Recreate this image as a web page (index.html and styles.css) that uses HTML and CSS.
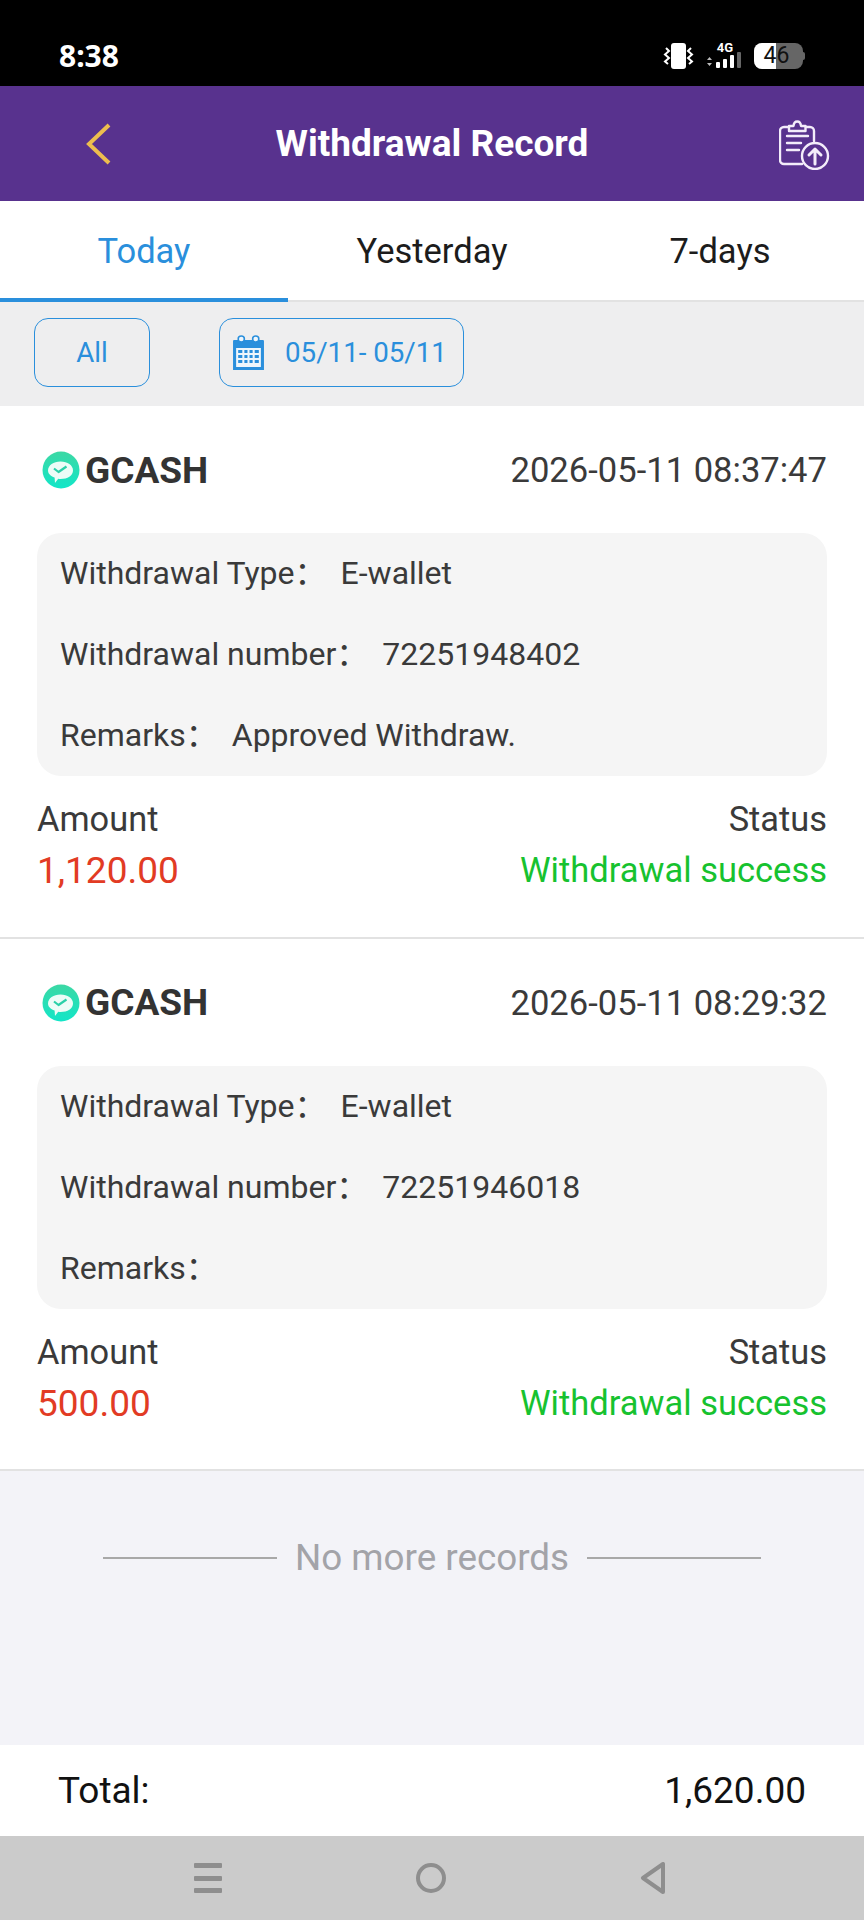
FILE: index.html
```html
<!DOCTYPE html>
<html lang="en">
<head>
<meta charset="utf-8">
<title>Withdrawal Record</title>
<link rel="stylesheet" href="styles.css">
</head>
<body>
<div class="app">
  <div class="statusbar">
    <span class="time">8:38</span>
    <div class="status-icons">
      <svg class="ic-vib" viewBox="0 0 32 26" width="32" height="26"><rect x="8" y="0" width="15" height="26" rx="3" fill="#fff"/><path d="M3 5l3 3-4 3.500 4 3.500-4 3.500 3 2.500M28 5l-3 3 4 3.500-4 3.500 4 3.500-3 2.500" fill="none" stroke="#fff" stroke-width="2"/></svg>
      <div class="signal">
        <span class="net">4G</span>
        <svg viewBox="0 0 35 17" width="35" height="17"><path d="M0 8l2.500-3L5 8zM0 11l2.500 3L5 11z" fill="#bbb"/><rect x="9" y="10" width="4" height="6" rx="1" fill="#fff"/><rect x="16" y="7" width="4" height="9" rx="1" fill="#fff"/><rect x="23" y="3" width="4" height="13" rx="1" fill="#fff"/><rect x="30" y="0" width="4" height="16" rx="1" fill="#666"/></svg>
      </div>
      <div class="battery"><div class="batt-fill"></div><span class="batt-num">46</span><i class="batt-tip"></i></div>
    </div>
  </div>
  <header class="topbar">
    <svg class="back" viewBox="0 0 26 44" width="26" height="44"><path d="M24 3L4 22l20 19" fill="none" stroke="#edbd4e" stroke-width="4"/></svg>
    <h1 class="title">Withdrawal Record</h1>
    <svg class="export" viewBox="0 0 51 50" width="51" height="50" fill="none" stroke="#f3ecfa" stroke-width="2.400" stroke-linecap="round" stroke-linejoin="round">
      <path d="M10 7H5a4 4 0 0 0-4 4v29a4 4 0 0 0 4 4h18"/>
      <path d="M27 7h4a4 4 0 0 1 4 4v10"/>
      <path d="M10 11V6h4.500c.5-6 7-6 7.500 0h4.500v5z"/>
      <path d="M8 16h21M8 23h14M8 30h12"/>
      <circle cx="36" cy="36" r="13"/>
      <path d="M36 44V29M30 35l6-6 6 6" stroke-width="3"/>
    </svg>
  </header>
  <nav class="tabs">
    <div class="tab active">Today</div>
    <div class="tab">Yesterday</div>
    <div class="tab">7-days</div>
  </nav>
  <div class="filters">
    <div class="chip chip-all">All</div>
    <div class="chip chip-date">
      <svg viewBox="0 0 32 36" width="33" height="36" preserveAspectRatio="none"><path d="M2 5h28a1 1 0 0 1 1 1v29H1V6a1 1 0 0 1 1-1z" fill="#2a8fdc"/><rect x="4" y="13" width="24" height="19" fill="#eef6fc"/><g fill="#2a8fdc"><rect x="6" y="15" width="4" height="3"/><rect x="12" y="15" width="3" height="3"/><rect x="17" y="15" width="3" height="3"/><rect x="22" y="15" width="4" height="3"/><rect x="6" y="20" width="4" height="3"/><rect x="12" y="20" width="3" height="3"/><rect x="17" y="20" width="3" height="3"/><rect x="22" y="20" width="4" height="3"/><rect x="6" y="25" width="4" height="3"/><rect x="12" y="25" width="3" height="3"/><rect x="17" y="25" width="3" height="3"/><rect x="22" y="25" width="4" height="3"/></g><circle cx="9" cy="4" r="3" fill="#eef6fc" stroke="#2a8fdc" stroke-width="1.500"/><circle cx="23" cy="4" r="3" fill="#eef6fc" stroke="#2a8fdc" stroke-width="1.500"/></svg>
      <span>05/11- 05/11</span>
    </div>
  </div>

  <section class="card">
    <div class="card-head">
      <div class="brand">
        <svg class="logo" viewBox="0 0 38 38" width="38" height="38"><defs><linearGradient id="g1" x1="0" y1="0" x2="0" y2="1"><stop offset="0" stop-color="#3cd8a4"/><stop offset="1" stop-color="#12e6c8"/></linearGradient></defs><circle cx="19" cy="19" r="18.500" fill="url(#g1)"/><path d="M18.500 10.500c7 0 12.500 3.800 12.500 9s-5.500 8.500-12.500 8.500c-.8 0-1.600 0-2.300-.2L13 32l-.4-5.500C8.500 25 6 22.500 6 19.500c0-5.200 5.500-9 12.500-9z" fill="#edfcf7"/><path d="M12 17.500l4.500 3.500 8-5.500" fill="none" stroke="#2bd0a8" stroke-width="2.200" stroke-linejoin="round"/></svg>
        <span class="brand-name">GCASH</span>
      </div>
      <span class="stamp">2026-05-11 08:37:47</span>
    </div>
    <div class="details">
      <div class="row">Withdrawal Type：<span class="val">E-wallet</span></div>
      <div class="row">Withdrawal number：<span class="val">72251948402</span></div>
      <div class="row">Remarks：<span class="val">Approved Withdraw.</span></div>
    </div>
    <div class="summary">
      <div class="sum-col"><span class="lbl">Amount</span><span class="amt">1,120.00</span></div>
      <div class="sum-col end"><span class="lbl">Status</span><span class="ok">Withdrawal success</span></div>
    </div>
  </section>

  <section class="card">
    <div class="card-head">
      <div class="brand">
        <svg class="logo" viewBox="0 0 38 38" width="38" height="38"><circle cx="19" cy="19" r="18.500" fill="url(#g1)"/><path d="M18.500 10.500c7 0 12.500 3.800 12.500 9s-5.500 8.500-12.500 8.500c-.8 0-1.600 0-2.300-.2L13 32l-.4-5.500C8.500 25 6 22.500 6 19.500c0-5.200 5.500-9 12.500-9z" fill="#edfcf7"/><path d="M12 17.500l4.500 3.500 8-5.500" fill="none" stroke="#2bd0a8" stroke-width="2.200" stroke-linejoin="round"/></svg>
        <span class="brand-name">GCASH</span>
      </div>
      <span class="stamp">2026-05-11 08:29:32</span>
    </div>
    <div class="details">
      <div class="row">Withdrawal Type：<span class="val">E-wallet</span></div>
      <div class="row">Withdrawal number：<span class="val">72251946018</span></div>
      <div class="row">Remarks：</div>
    </div>
    <div class="summary">
      <div class="sum-col"><span class="lbl">Amount</span><span class="amt">500.00</span></div>
      <div class="sum-col end"><span class="lbl">Status</span><span class="ok">Withdrawal success</span></div>
    </div>
  </section>

  <div class="list-end">
    <div class="nomore"><i class="rule"></i><span>No more records</span><i class="rule"></i></div>
  </div>

  <div class="total"><span>Total:</span><span>1,620.00</span></div>

  <div class="navbar">
    <svg viewBox="0 0 28 30" width="28" height="30"><g fill="#8e8e8e"><rect x="0" y="0" width="28" height="5" rx="1"/><rect x="0" y="13" width="28" height="5" rx="1"/><rect x="0" y="25" width="28" height="5" rx="1"/></g></svg>
    <svg viewBox="0 0 30 30" width="30" height="30"><circle cx="15" cy="15" r="13" fill="none" stroke="#8e8e8e" stroke-width="4"/></svg>
    <svg viewBox="0 0 26 32" width="26" height="32"><path d="M23 2v28L3 16z" fill="none" stroke="#8e8e8e" stroke-width="4" stroke-linejoin="round"/></svg>
  </div>
</div>
</body>
</html>
```

FILE: styles.css
```css
* { box-sizing: border-box; }
html, body { margin: 0; padding: 0; }
body { font-family: Roboto, "Noto Sans CJK SC", "Liberation Sans", sans-serif; background: #f3f3f8; }
.app { width: 864px; height: 1920px; display: flex; flex-direction: column; background: #f3f3f8; overflow: hidden; }

.statusbar { height: 86px; background: #000; color: #fff; display: flex; align-items: flex-end; justify-content: space-between; padding: 0 61px 17px 59px; flex: none; }
.time { font-size: 30px; font-weight: 700; line-height: 30px; margin-bottom: -2px; font-family: "Noto Sans", Roboto, sans-serif; }
.status-icons { display: flex; align-items: flex-end; gap: 12px; }
.signal { display: flex; flex-direction: column; align-items: flex-end; width: 35px; }
.net { font-size: 13px; font-weight: 700; line-height: 9px; margin-right: 9px; }
.battery { position: relative; width: 49px; height: 26px; border-radius: 8px; background: #666; }
.batt-fill { width: 22px; height: 26px; background: #fff; border-radius: 8px 0 0 8px; }
.batt-num { position: absolute; left: 0; top: 0; width: 45px; text-align: center; color: #111; font-size: 23px; line-height: 26px; }
.batt-tip { position: absolute; right: -2px; top: 9px; width: 2px; height: 8px; background: #666; border-radius: 0 2px 2px 0; }

.topbar { height: 115px; background: #58328e; display: grid; grid-template-columns: 1fr auto 1fr; align-items: center; padding: 0 34px; flex: none; }
.title { margin: 0; color: #fff; font-size: 37px; font-weight: 700; line-height: 44px; }
.back { justify-self: start; margin-left: 51px; }
.export { justify-self: end; margin-top: 2px; }

.tabs { height: 101px; background: #fff; display: flex; border-bottom: 2px solid #e2e2e2; flex: none; }
.tab { flex: 1; height: 101px; display: flex; align-items: center; justify-content: center; font-size: 34.500px; color: #1c1c1c; border-bottom: 4px solid transparent; padding-top: 2px; }
.tab.active { color: #2a8fdc; border-bottom-color: #2a8fdc; }

.filters { height: 104px; background: #eeeeef; display: flex; align-items: flex-start; gap: 69px; padding: 16px 0 0 34px; flex: none; }
.chip { height: 69px; border: 1.500px solid #2a8fdc; border-radius: 14px; color: #2a8fdc; display: flex; align-items: center; justify-content: center; font-size: 27.700px; }
.chip-all { width: 116px; }
.chip-date { width: 245px; gap: 20px; padding-right: 4px; }

.card { background: #fff; padding: 39px 37px 0; height: 532.500px; border-bottom: 2px solid #e2e2e2; flex: none; }
.card-head { display: flex; align-items: center; justify-content: space-between; height: 50px; }
.brand { display: flex; align-items: center; gap: 5px; padding-left: 5px; }
.logo { flex: none; }
.brand-name { font-size: 37px; font-weight: 700; color: #333; }
.stamp { font-size: 34.600px; color: #3a3a3a; }
.details { margin-top: 38px; height: 243px; background: #f5f5f5; border-radius: 24px; padding: 0 23px; display: flex; flex-direction: column; justify-content: space-around; }
.row { font-size: 32px; color: #3a3a3a; line-height: 40px; margin-top: -1px; }
.val { margin-left: 14px; }
.summary { display: flex; justify-content: space-between; margin-top: 21px; }
.sum-col { display: flex; flex-direction: column; gap: 8px; }
.sum-col.end { align-items: flex-end; }
.lbl { font-size: 34.400px; line-height: 44px; color: #3a3a3a; }
.amt { font-size: 37px; line-height: 44px; color: #e23b24; }
.ok { font-size: 34.500px; line-height: 44px; color: #17c22f; margin-top: -1px; }

.list-end { flex: 1; padding-top: 65px; }
.nomore { display: flex; align-items: center; justify-content: center; gap: 18px; color: #a3a3a8; font-size: 36.800px; line-height: 44px; }
.rule { width: 174px; height: 2px; background: #a8a8a8; }

.total { height: 91px; background: #fff; display: flex; align-items: center; justify-content: space-between; padding: 0 58px; font-size: 37px; color: #111; flex: none; }

.navbar { height: 84px; background: #cbcbcb; display: flex; align-items: center; justify-content: space-between; padding: 0 198px 0 194px; flex: none; }
```
